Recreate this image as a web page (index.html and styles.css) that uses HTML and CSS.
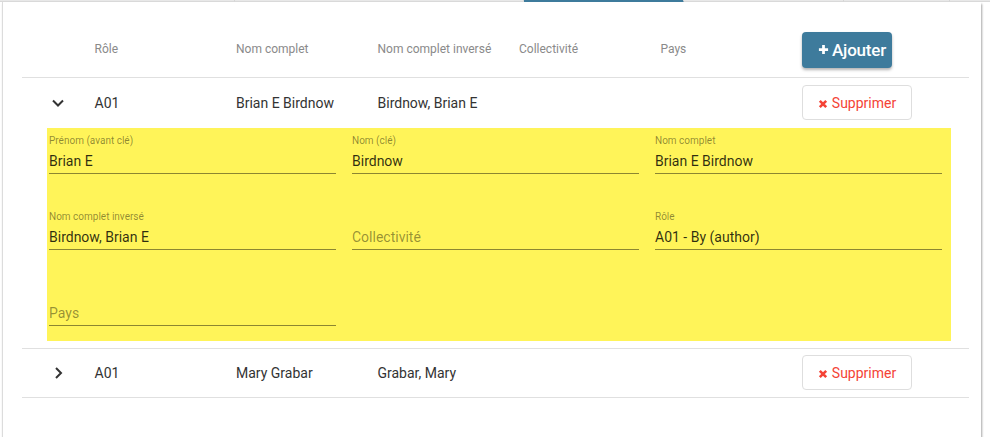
FILE: index.html
```html
<!DOCTYPE html>
<html lang="fr">
<head>
<meta charset="utf-8">
<title>Contributeurs</title>
<link rel="stylesheet" href="styles.css">
</head>
<body>
<div class="tabs">
  <span class="tab t1"></span>
  <span class="tab t2"></span>
  <span class="tab t3 active"></span>
  <span class="tab t4"></span>
  <span class="tab t5"></span>
  <span class="tab t6"></span>
</div>
<div class="panel">
  <div class="table">
    <div class="row head">
      <div class="cell"></div>
      <div class="cell">Rôle</div>
      <div class="cell">Nom complet</div>
      <div class="cell">Nom complet inversé</div>
      <div class="cell">Collectivité</div>
      <div class="cell">Pays</div>
      <div class="cell">
        <button class="btn btn-add" type="button">
          <svg class="ico-plus" viewBox="0 0 12 12" width="11" height="11"><path d="M6 1v10M1 6h10" stroke="#fff" stroke-width="3" fill="none"/></svg>Ajouter
        </button>
      </div>
    </div>

    <div class="row body open">
      <div class="cell toggle">
        <svg viewBox="0 0 14 14" width="14" height="14"><path d="M2 4.5L7 9.5l5-5" stroke="#333" stroke-width="2" fill="none"/></svg>
      </div>
      <div class="cell">A01</div>
      <div class="cell">Brian E Birdnow</div>
      <div class="cell">Birdnow, Brian E</div>
      <div class="cell"></div>
      <div class="cell"></div>
      <div class="cell">
        <button class="btn btn-del" type="button">
          <svg class="ico-x" viewBox="0 0 10 10" width="10" height="10"><path d="M1.8 1.8l6.4 6.4M8.2 1.8l-6.4 6.4" stroke="#f44336" stroke-width="2.6" fill="none"/></svg>Supprimer
        </button>
      </div>
    </div>

    <div class="detail">
      <div class="form">
        <div class="field">
          <label>Prénom (avant clé)</label>
          <div class="input">Brian E</div>
        </div>
        <div class="field">
          <label>Nom (clé)</label>
          <div class="input">Birdnow</div>
        </div>
        <div class="field">
          <label>Nom complet</label>
          <div class="input">Brian E Birdnow</div>
        </div>
        <div class="field">
          <label>Nom complet inversé</label>
          <div class="input">Birdnow, Brian E</div>
        </div>
        <div class="field">
          <label></label>
          <div class="input empty">Collectivité</div>
        </div>
        <div class="field">
          <label>Rôle</label>
          <div class="input">A01 - By (author)</div>
        </div>
        <div class="field">
          <label></label>
          <div class="input empty">Pays</div>
        </div>
      </div>
    </div>

    <div class="row body last">
      <div class="cell toggle">
        <svg viewBox="0 0 14 14" width="14" height="14"><path d="M5 2L10 7 5 12" stroke="#333" stroke-width="2" fill="none"/></svg>
      </div>
      <div class="cell">A01</div>
      <div class="cell">Mary Grabar</div>
      <div class="cell">Grabar, Mary</div>
      <div class="cell"></div>
      <div class="cell"></div>
      <div class="cell">
        <button class="btn btn-del" type="button">
          <svg class="ico-x" viewBox="0 0 10 10" width="10" height="10"><path d="M1.8 1.8l6.4 6.4M8.2 1.8l-6.4 6.4" stroke="#f44336" stroke-width="2.6" fill="none"/></svg>Supprimer
        </button>
      </div>
    </div>
  </div>
</div>
</body>
</html>
```
FILE: styles.css
```css
* { box-sizing: border-box; }

html, body {
  margin: 0;
  background: #fff;
  font-family: Roboto, "Liberation Sans", Arial, sans-serif;
  color: #333;
}

/* bottom edge of the tab bar */
.tabs {
  display: flex;
  height: 2px;
  background: #e8e8e8;
}
.tab {
  height: 2px;
  border-bottom: 1px solid #d9d9d9;
  border-right: 1px solid #d6d6d6;
}
.t1 { width: 235px; }
.t2 { width: 289px; }
.t3 { width: 160px; }
.t4 { width: 160px; }
.t5 { width: 106px; }
.t6 { flex: 1; border-right: 0; }
.tab.active {
  background: #3e7b9c;
  border-bottom-color: #3e7b9c;
}

.panel {
  margin: 0 9px 0 2px;
  height: 435px;
  background: #fff;
  border-left: 1px solid #dcdcdc;
  box-shadow: 1px 2px 2px rgba(0, 0, 0, 0.35);
  padding: 20px 12px 0 19px;
}

.row {
  display: grid;
  grid-template-columns: 62.5px repeat(5, 141.5px) 1fr;
  align-items: center;
  border-bottom: 1px solid #e0e0e0;
}
.cell {
  padding-left: 10px;
  white-space: nowrap;
}
.head {
  height: 56px;
  font-size: 12px;
  color: #8a8a8a;
}
.head .cell { margin-top: -2px; }
.head .cell:last-child { margin-top: 0; }
.body {
  font-size: 14px;
  color: #333;
}
.open {
  height: 50px;
  border-bottom: 0;
}
.last {
  height: 49px;
}
.toggle {
  padding-left: 29px;
  display: flex;
  align-items: center;
}
.toggle svg { display: block; }

.btn {
  font-family: inherit;
  display: inline-flex;
  align-items: center;
  cursor: pointer;
}
.btn-add {
  height: 36px;
  width: 90px;
  justify-content: flex-start;
  background: #3e7b9c;
  color: #fff;
  border: 0;
  border-radius: 4px;
  font-size: 17px;
  font-weight: 500;
  letter-spacing: -0.2px;
  box-shadow: 0 2px 3px rgba(0, 0, 0, 0.3);
  padding: 0 0 0 16px;
}
.ico-plus { margin-right: 3px; flex: none; }
.btn-del {
  height: 35px;
  width: 110px;
  justify-content: center;
  background: #fff;
  color: #f44336;
  border: 1px solid #dedede;
  border-radius: 4px;
  font-size: 14px;
  padding: 0;
  margin-top: -1px;
}
.ico-x { margin-right: 4px; margin-top: 2px; }

/* expanded editor */
.detail {
  padding: 0 18px 7px 25px;
  border-bottom: 1px solid #e0e0e0;
}
.form {
  background: #fff459;
  padding: 7px 9px 15px 2px;
  display: grid;
  grid-template-columns: repeat(3, 287px);
  column-gap: 16px;
  row-gap: 37px;
}
.field {
  display: flex;
  flex-direction: column;
}
.field label {
  height: 12px;
  font-size: 10px;
  line-height: 11px;
  color: rgba(0, 0, 0, 0.45);
}
.input {
  height: 27px;
  padding-top: 2px;
  border-bottom: 1px solid rgba(0, 0, 0, 0.45);
  font-size: 14px;
  line-height: 24px;
  color: rgba(0, 0, 0, 0.82);
}
.input.empty { color: rgba(0, 0, 0, 0.42); }
```
